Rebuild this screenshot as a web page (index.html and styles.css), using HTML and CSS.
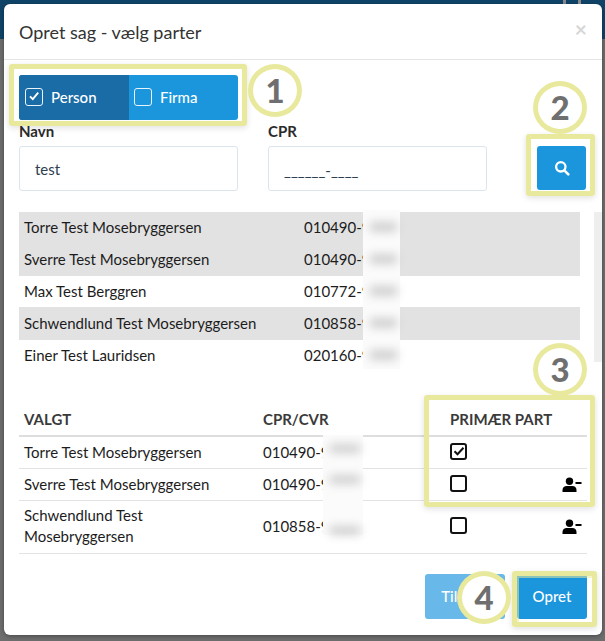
FILE: index.html
```html
<!DOCTYPE html>
<html lang="da">
<head>
<meta charset="utf-8">
<title>Opret sag</title>
<link rel="stylesheet" href="styles.css">
</head>
<body>
<div class="modal">
  <header class="modal-head">
    <h1>Opret sag - vælg parter</h1>
    <span class="close">×</span>
  </header>
  <div class="modal-body">
    <div class="toggle">
      <div class="opt opt-on">
        <span class="box"><svg viewBox="0 0 18 18" width="18" height="18"><path d="M5 9.3l2.8 2.8 5.4-6.4" fill="none" stroke="#fff" stroke-width="1.9"/></svg></span>Person
      </div>
      <div class="opt opt-off">
        <span class="box"></span>Firma
      </div>
    </div>
    <div class="form">
      <div class="field">
        <label>Navn</label>
        <div class="input input-name">test</div>
      </div>
      <div class="field">
        <label>CPR</label>
        <div class="input input-mask">______-____</div>
      </div>
      <button class="search" type="button" aria-label="Søg">
        <svg viewBox="0 0 16 16" width="16" height="16"><circle cx="6.8" cy="6.8" r="4.7" fill="none" stroke="#fff" stroke-width="2.3"/><path d="M10.3 10.3l4 4" stroke="#fff" stroke-width="2.6" stroke-linecap="round"/></svg>
      </button>
    </div>
    <div class="results">
      <div class="row row-sel"><span>Torre Test Mosebryggersen</span><span class="cpr">010490-9</span></div>
      <div class="row row-sel"><span>Sverre Test Mosebryggersen</span><span class="cpr">010490-9</span></div>
      <div class="row row-short"><span>Max Test Berggren</span><span class="cpr">010772-9</span></div>
      <div class="row row-sel row-tall"><span>Schwendlund Test Mosebryggersen</span><span class="cpr">010858-9</span></div>
      <div class="row"><span>Einer Test Lauridsen</span><span class="cpr">020160-9</span></div>
      <div class="blur blur-list"><i></i><i></i><i></i><i></i><i></i></div>
    </div>
    <div class="scroll"></div>
    <div class="selected">
      <div class="sel-row sel-head"><span>VALGT</span><span>CPR/CVR</span><span>PRIMÆR PART</span><span></span></div>
      <div class="sel-row">
        <span>Torre Test Mosebryggersen</span><span>010490-9</span>
        <span class="check"><svg viewBox="0 0 16 16" width="16" height="16"><path d="M3.5 8.2l3 3 6-6.5" fill="none" stroke="#111" stroke-width="2"/></svg></span><span></span>
      </div>
      <div class="sel-row">
        <span>Sverre Test Mosebryggersen</span><span>010490-9</span>
        <span class="check"></span>
        <span class="remove"><svg viewBox="0 0 20 16" width="20" height="16"><circle cx="7.5" cy="4.2" r="3.7"/><path d="M0.5 15v-2c0-2.6 2-4 4-4h6c2 0 4 1.4 4 4v2z"/><rect x="13.5" y="5" width="6" height="2"/></svg></span>
      </div>
      <div class="sel-row sel-tall">
        <span>Schwendlund Test<br>Mosebryggersen</span><span>010858-9</span>
        <span class="check"></span>
        <span class="remove"><svg viewBox="0 0 20 16" width="20" height="16"><circle cx="7.5" cy="4.2" r="3.7"/><path d="M0.5 15v-2c0-2.6 2-4 4-4h6c2 0 4 1.4 4 4v2z"/><rect x="13.5" y="5" width="6" height="2"/></svg></span>
      </div>
      <div class="blur blur-sel"><i></i><i></i><i></i></div>
    </div>
    <footer class="foot">
      <button class="btn btn-faded" type="button">Tilbage</button>
      <button class="btn" type="button">Opret</button>
    </footer>
  </div>

  <div class="mark mark-1"></div>
  <div class="mark mark-2"></div>
  <div class="mark mark-3"></div>
  <div class="mark mark-4"></div>
  <div class="num num-1">1</div>
  <div class="num num-2">2</div>
  <div class="num num-3">3</div>
  <div class="num num-4">4</div>
</div>
</body>
</html>
```
FILE: styles.css
```css
* { box-sizing: border-box; }
html, body { margin: 0; height: 100%; }
body {
  background: linear-gradient(#0f4468 0, #0f4468 39px, #6d6d6d 39px);
  font-family: Lato, "Liberation Sans", sans-serif;
  color: #1c1c1c;
  padding: 4px 3px 6px 4px;
  overflow: hidden;
  position: relative;
}
body::before,
body::after {
  content: "";
  position: absolute;
  top: 0;
  width: 3px;
  height: 4px;
  background: #8b8b8b;
}
body::before { left: 563px; }
body::after { left: 578px; }
.modal {
  position: relative;
  width: 598px;
  height: 631px;
  background: #fff;
  border-radius: 6px;
  box-shadow: 0 1px 4px rgba(0,0,0,.35);
}
.modal-head {
  height: 56px;
  border-bottom: 1px solid #e5e5e5;
  padding: 0 15px;
  display: flex;
  align-items: center;
  justify-content: space-between;
}
.modal-head h1 {
  margin: 0;
  font-size: 18px;
  font-weight: 400;
  color: #333;
}
.close {
  font-size: 21px;
  font-weight: 700;
  color: #d6d6d6;
  margin-top: -6px;
}
.modal-body { padding: 15px 15px 0; position: relative; }
.toggle {
  display: flex;
  width: 219px;
  height: 45px;
  border-radius: 3px;
  overflow: hidden;
  background: #1b96dd;
  color: #fff;
  font-size: 15px;
  font-weight: 500;
}
.opt {
  flex: 0 0 110px;
  display: flex;
  align-items: center;
  gap: 8px;
  padding: 0 0 2px 6px;
}
.opt-off { padding-left: 5px; }
.opt-on { background: #1a6ca6; }
.box {
  width: 18px;
  height: 18px;
  border: 1.5px solid #e8f4fb;
  border-radius: 3px;
  display: block;
  position: relative;
}
.box svg { position: absolute; left: -1.5px; top: -1.5px; display: block; }
.form { display: flex; align-items: flex-end; gap: 30px; margin-top: 2px; }
.field { width: 219px; }
.field label {
  display: block;
  font-size: 15px;
  font-weight: 700;
  line-height: 18px;
  margin-bottom: 6px;
  color: #2b2b2b;
}
.input {
  height: 45px;
  border: 1px solid #dce5ec;
  border-radius: 3px;
  padding-left: 15px;
  font-size: 15px;
  line-height: 43px;
  color: #2e3f52;
}
.input-name { padding-top: 1px; }
.input-mask { padding-top: 2px; }
.search {
  width: 49px;
  height: 44px;
  margin-left: 20px;
  margin-bottom: 1px;
  border: 0;
  border-radius: 3px;
  background: #1b96dd;
  display: flex;
  align-items: center;
  justify-content: center;
  padding: 0;
}
.results {
  position: relative;
  width: 561px;
  margin-top: 21px;
  font-size: 15px;
}
.row {
  display: flex;
  height: 32px;
  align-items: center;
  padding: 0 0 2px 5px;
  white-space: nowrap;
}
.row-short { height: 31px; }
.row-tall { height: 33px; }
.row-sel { background: #e2e2e2; }
.row > span:first-child { width: 280px; }
.blur {
  position: absolute;
  background: #fbfbfb;
  display: flex;
  flex-direction: column;
}
.blur i {
  display: block;
  background: #cfcfcf;
  filter: blur(5px);
  border-radius: 6px;
  margin-left: 6px;
}
.blur-list {
  left: 344px;
  top: -2px;
  width: 37px;
  height: 159px;
  padding-top: 12px;
  gap: 22px;
}
.blur-list i { height: 10px; width: 29px; }
.scroll {
  position: absolute;
  right: 0;
  top: 152px;
  width: 8px;
  height: 150px;
  background: #eeeeee;
}
.selected {
  position: relative;
  margin-top: 30px;
  font-size: 15px;
  width: 568px;
}
.sel-row {
  display: grid;
  grid-template-columns: 239px 187px 1fr 42px;
  align-items: center;
  height: 32px;
  padding: 0 0 2px 5px;
  border-bottom: 1px solid #e3e3e3;
  white-space: nowrap;
}
.sel-head {
  height: 35px;
  padding: 1px 0 0 5px;
  font-weight: 700;
  color: #3a3a3a;
  border-bottom: 2px solid #dedede;
}
.sel-tall { height: 53px; line-height: 21px; }
.check {
  width: 17px;
  height: 17px;
  border: 2px solid #111;
  border-radius: 3px;
  display: block;
  position: relative;
  margin-top: -1px;
}
.check svg { position: absolute; left: -1.5px; top: -1.5px; display: block; }
.remove { display: flex; justify-content: flex-end; padding: 2px 5px 0 0; }
.remove svg { display: block; fill: #000; }
.blur-sel {
  left: 304px;
  top: 33px;
  width: 40px;
  height: 100px;
  padding-top: 9px;
  gap: 22px;
}
.blur-sel i { height: 10px; width: 32px; }
.blur-sel i:last-child { margin-top: 20px; }
.foot {
  display: flex;
  justify-content: flex-end;
  gap: 12px;
  margin-top: 20px;
  width: 568px;
}
.btn {
  width: 70px;
  height: 45px;
  border: 0;
  border-radius: 3px;
  background: #1b96dd;
  color: #fff;
  font-family: inherit;
  font-size: 15px;
  font-weight: 500;
  padding: 0 0 2px;
}
.btn-faded { width: 80px; background: #68b9e9; }
.mark {
  position: absolute;
  border: 5px solid #e8e99d;
  border-radius: 3px;
  box-shadow: 0 2px 6px rgba(0,0,0,.12);
}
.mark-1 { left: 5px; top: 60px; width: 238px; height: 62px; }
.mark-2 { left: 522px; top: 130px; width: 69px; height: 62px; }
.mark-3 { left: 420px; top: 391px; width: 171px; height: 112px; }
.mark-4 {
  left: 508px;
  top: 567px;
  width: 85px;
  height: 56px;
  box-shadow: 0 2px 6px rgba(0,0,0,.12), inset 2px 2px 0 rgba(232,233,157,.55);
}
.num {
  position: absolute;
  width: 54px;
  height: 53px;
  border: 5px solid #e8e99d;
  border-radius: 50%;
  background: #fff;
  color: #6f6f6f;
  font-size: 33px;
  font-weight: 900;
  line-height: 43px;
  text-align: center;
}
.num-1 { left: 244px; top: 60px; }
.num-2 { left: 529px; top: 77px; }
.num-3 { left: 529px; top: 339px; }
.num-4 { left: 453px; top: 567px; }
```
